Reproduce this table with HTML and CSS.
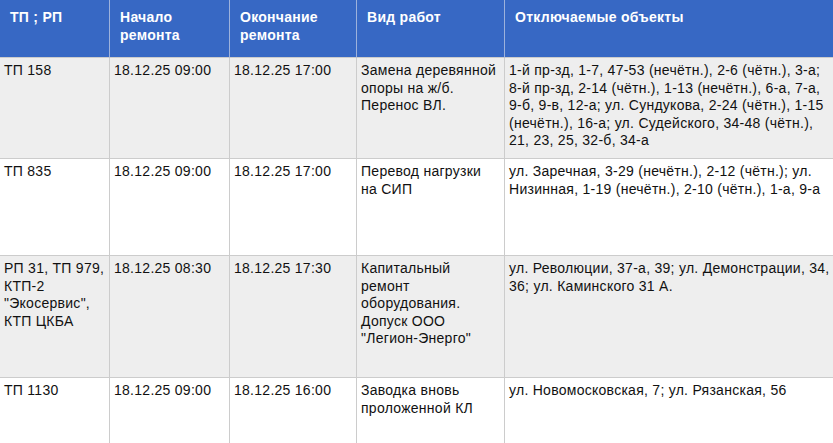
FILE: index.html
```html
<!DOCTYPE html>
<html lang="ru">
<head>
<meta charset="utf-8">
<title>Отключения</title>
<link rel="stylesheet" href="styles.css">
</head>
<body>
<div class="wrap">
<table class="grid">
  <colgroup>
    <col class="c1"><col class="c2"><col class="c3"><col class="c4"><col class="c5">
  </colgroup>
  <thead>
    <tr class="head">
      <th>ТП ; РП</th>
      <th>Начало<br>ремонта</th>
      <th>Окончание<br>ремонта</th>
      <th>Вид работ</th>
      <th>Отключаемые объекты</th>
    </tr>
  </thead>
  <tbody>
    <tr class="r1 alt">
      <td>ТП 158</td>
      <td>18.12.25 09:00</td>
      <td>18.12.25 17:00</td>
      <td>Замена деревянной<br>опоры на ж/б.<br>Перенос ВЛ.</td>
      <td>1-й пр-зд, 1-7, 47-53 (нечётн.), 2-6 (чётн.), 3-а;<br>8-й пр-зд, 2-14 (чётн.), 1-13 (нечётн.), 6-а, 7-а,<br>9-б, 9-в, 12-а; ул. Сундукова, 2-24 (чётн.), 1-15<br>(нечётн.), 16-а; ул. Судейского, 34-48 (чётн.),<br>21, 23, 25, 32-б, 34-а</td>
    </tr>
    <tr class="r2">
      <td>ТП 835</td>
      <td>18.12.25 09:00</td>
      <td>18.12.25 17:00</td>
      <td>Перевод нагрузки<br>на СИП</td>
      <td>ул. Заречная, 3-29 (нечётн.), 2-12 (чётн.); ул.<br>Низинная, 1-19 (нечётн.), 2-10 (чётн.), 1-а, 9-а</td>
    </tr>
    <tr class="r3 alt">
      <td>РП 31, ТП 979,<br>КТП-2<br>"Экосервис",<br>КТП ЦКБА</td>
      <td>18.12.25 08:30</td>
      <td>18.12.25 17:30</td>
      <td>Капитальный<br>ремонт<br>оборудования.<br>Допуск ООО<br>"Легион-Энерго"</td>
      <td>ул. Революции, 37-а, 39; ул. Демонстрации, 34,<br>36; ул. Каминского 31 А.</td>
    </tr>
    <tr class="r4">
      <td>ТП 1130</td>
      <td>18.12.25 09:00</td>
      <td>18.12.25 16:00</td>
      <td>Заводка вновь<br>проложенной КЛ</td>
      <td>ул. Новомосковская, 7; ул. Рязанская, 56</td>
    </tr>
  </tbody>
</table>
</div>
</body>
</html>
```

FILE: styles.css
```css
html, body {
  margin: 0;
  padding: 0;
  background: #ffffff;
  overflow: hidden;
}

.wrap {
  width: 833px;
  height: 443px;
  overflow: hidden;
}

.grid {
  border-collapse: separate;
  border-spacing: 0;
  table-layout: fixed;
  width: 841px;
  font-family: "Liberation Sans", Arial, sans-serif;
  font-size: 14px;
  line-height: 17.5px;
  letter-spacing: 0.27px;
  color: #111111;
}

.c1 { width: 110px; }
.c2 { width: 120px; }
.c3 { width: 127px; }
.c4 { width: 148px; }
.c5 { width: 336px; }

.grid th,
.grid td {
  box-sizing: border-box;
  vertical-align: top;
  text-align: left;
  border-right: 1px solid #cccccc;
  border-bottom: 1px solid #cccccc;
  white-space: nowrap;
}

.grid th {
  background: #3768c4;
  color: #ffffff;
  font-weight: bold;
  padding: 9px 10px 0 10px;
  border-right-color: #9db2dc;
}

.grid td {
  padding: 4px 4px 0 4px;
}

.head { height: 58px; }
.r1 { height: 101px; }
.r2 { height: 97px; }
.r3 { height: 122px; }
.r4 { height: 97px; }

.alt td { background: #eeeeee; }
```
